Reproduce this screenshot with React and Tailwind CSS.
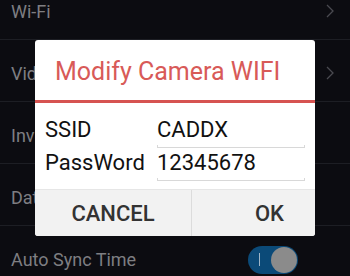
export default function App() {
  const rows = ['Wi-Fi', 'Video', 'Invert', 'Date', 'Auto Sync Time']

  return (
    <div className="relative w-[350px] h-[276px] overflow-hidden bg-[#0c0c11]" style={{ fontFamily: 'Roboto, "Liberation Sans", sans-serif' }}>
      {/* settings list behind the dialog */}
      <div className="-mt-[22px]">
        {rows.map((r, i) => (
          <div key={r} className="h-[62px] flex items-center pl-[11px] pr-[16px] border-b border-[#1d1e24]">
            <span className="flex-1 pt-[6px] text-[18px] text-[#7e7e82]">{r}</span>
            {i < 2 && (
              <svg width="8" height="14" viewBox="0 0 8 14" className="mt-[4px]">
                <path d="M1 1l6 6-6 6" fill="none" stroke="#4a4a50" strokeWidth="1.3" />
              </svg>
            )}
            {i === 4 && (
              <div className="mr-[36px] mt-[6px] w-[50px] h-[28px] rounded-full bg-[#0b4a78] flex items-center justify-between pl-[11px] pr-[1px]">
                <span className="w-[1px] h-[13px] bg-[#9fb6c8]"></span>
                <span className="w-[26px] h-[26px] rounded-full bg-[#8b8b8b]"></span>
              </div>
            )}
          </div>
        ))}
      </div>

      {/* dialog */}
      <div className="absolute left-[35px] top-[40px] w-[280px] h-[196px] bg-white rounded-[3px] overflow-hidden flex flex-col">
        <div className="h-[63px] flex items-center pl-[20px] pt-[3px] text-[25px] text-[#d85a58] border-b-[3px] border-[#d65351]">
          Modify Camera WIFI
        </div>
        <div className="flex-1 flex flex-col pt-[12px] pl-[10px] text-[22px] text-[#111]">
          <div className="flex h-[33px]">
            <div className="w-[112px] leading-[30px]">SSID</div>
            <div className="w-[148px] flex flex-col">
              <div className="leading-[30px]">CADDX</div>
              <div className="h-[3px] border-x border-b border-[#d8d8d8]"></div>
            </div>
          </div>
          <div className="flex h-[33px]">
            <div className="w-[112px] leading-[30px]">PassWord</div>
            <div className="w-[148px] flex flex-col">
              <div className="leading-[30px]">12345678</div>
              <div className="h-[3px] border-x border-b border-[#d8d8d8]"></div>
            </div>
          </div>
        </div>
        <div className="h-[47px] flex bg-[#f2f2f2] border-t border-[#e6e6e6] text-[22px] font-medium text-[#333]">
          <div className="w-[156px] flex items-center justify-center">CANCEL</div>
          <div className="flex-1 flex items-center justify-end pr-[31px] border-l border-[#dcdcdc]">OK</div>
        </div>
      </div>
    </div>
  )
}
